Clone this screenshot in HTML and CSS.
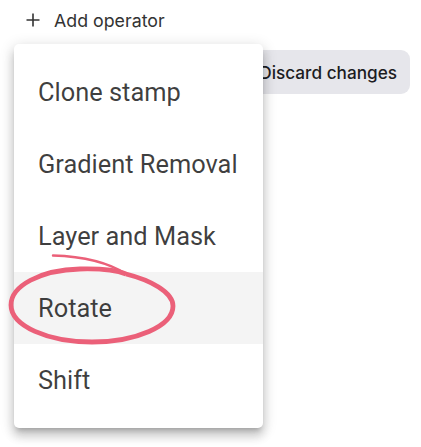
FILE: index.html
```html
<!DOCTYPE html>
<html>
<head>
<meta charset="utf-8">
<link rel="stylesheet" href="styles.css">
</head>
<body>
<div class="page">
  <div class="header">
    <svg class="plus" width="16" height="16" viewBox="0 0 16 16"><path d="M8 1.5v13M1.5 8h13" stroke="#333" stroke-width="1.6" fill="none"/></svg>
    <span class="add-label">Add operator</span>
  </div>
  <div class="actions">
    <button class="discard">Discard changes</button>
  </div>
  <div class="menu">
    <div class="item">Clone stamp</div>
    <div class="item">Gradient Removal</div>
    <div class="item">Layer and Mask</div>
    <div class="item active">Rotate</div>
    <div class="item">Shift</div>
  </div>
  <svg class="mark" width="421" height="447" viewBox="0 0 421 447">
    <path d="M126 274 C150 280 173 292 173 306 C173 326 136 342 92 342 C48 342 11 326 11 305 C11 286 40 270 80 269 C100 268.5 116 270 126 274" fill="none" stroke="#eb6079" stroke-width="4.8"/>
    <path d="M53 255.5 Q100 257 126 274" fill="none" stroke="#eb6079" stroke-width="2.4" stroke-linecap="round"/>
  </svg>
</div>
</body>
</html>
```
FILE: styles.css
```css
* { box-sizing: border-box; }
html, body { margin: 0; padding: 0; background: #fff; }
.page {
  position: relative;
  width: 421px;
  height: 447px;
  overflow: hidden;
  font-family: Inter, "Liberation Sans", sans-serif;
}
.header {
  display: flex;
  align-items: center;
  gap: 13px;
  height: 40px;
  padding-left: 25px;
  color: #333;
}
.add-label { font-size: 17.8px; }
.actions {
  display: flex;
  justify-content: flex-end;
  padding: 10px 11px 0 0;
}
.discard {
  height: 44px;
  padding: 0 13px 0 40px;
  border: none;
  border-radius: 9px;
  background: #e6e6eb;
  color: #1c1c22;
  font-family: Inter, "Liberation Sans", sans-serif;
  font-size: 17.2px;
  font-weight: 500;
}
.menu {
  position: absolute;
  left: 14px;
  top: 44px;
  width: 249px;
  padding: 12px 0;
  background: #fff;
  border-radius: 5px;
  box-shadow: 0 5px 5px -3px rgba(0,0,0,.2), 0 8px 10px 1px rgba(0,0,0,.14), 0 3px 14px 2px rgba(0,0,0,.12);
}
.item {
  height: 72px;
  display: flex;
  align-items: center;
  padding-left: 24px;
  font-family: Roboto, "Liberation Sans", sans-serif;
  font-size: 25.4px;
  color: rgba(0,0,0,.76);
}
.item.active { background: #f4f4f4; }
.mark {
  position: absolute;
  left: 0;
  top: 0;
  pointer-events: none;
}
```
